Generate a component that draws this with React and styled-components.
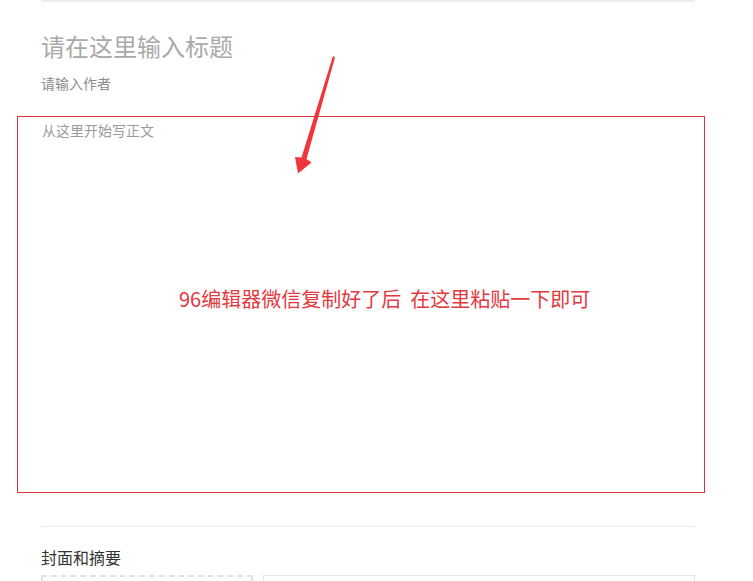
import React from "react";
import styled, { createGlobalStyle } from "styled-components";

const Global = createGlobalStyle`
  html, body { margin: 0; padding: 0; background: #fff; }
  body { font-family: "Noto Sans CJK SC", "Noto Sans", sans-serif; }
`;

const Page = styled.div`
  position: relative;
  width: 753px;
  height: 581px;
  overflow: hidden;
`;

const Column = styled.div`
  margin: 0 58px 0 41px;
  border-top: 2px solid #ececec;
`;

const Title = styled.div`
  margin-top: 28px;
  font-size: 24px;
  line-height: 32px;
  color: #a9a9a9;
`;

const Author = styled.div`
  margin-top: 11px;
  font-size: 14px;
  line-height: 20px;
  color: #8c8c8c;
`;

const EditorBox = styled.div`
  margin: 23px -10px 0 -24px;
  height: 375px;
  border: 1px solid #d9363e;
  display: flex;
  flex-direction: column;
`;

const Placeholder = styled.div`
  margin: 3px 0 0 24px;
  font-size: 14px;
  line-height: 20px;
  color: #9a9a9a;
`;

const Hint = styled.div`
  margin: 146px 0 0 161px;
  font-size: 20px;
  line-height: 26px;
  color: #e3393f;
  white-space: pre;
`;

const Divider = styled.div`
  margin-top: 33px;
  border-top: 1px solid #ebebeb;
`;

const SectionTitle = styled.div`
  margin-top: 18px;
  font-size: 16px;
  line-height: 24px;
  color: #333;
`;

const CoverRow = styled.div`
  margin-top: 6px;
  display: flex;
  gap: 10px;
`;

const CoverBox = styled.div`
  width: 208px;
  height: 40px;
  border: 2px dashed #e2e2e2;
`;

const DigestBox = styled.div`
  flex: 1;
  height: 40px;
  border: 1px solid #e4e4e4;
`;

const Arrow = styled.svg`
  position: absolute;
  left: 0;
  top: 0;
  pointer-events: none;
`;

export default function App() {
  return (
    <Page>
      <Global />
      <Column>
        <Title>请在这里输入标题</Title>
        <Author>请输入作者</Author>
        <EditorBox>
          <Placeholder>从这里开始写正文</Placeholder>
          <Hint>{"96编辑器微信复制好了后  在这里粘贴一下即可"}</Hint>
        </EditorBox>
        <Divider />
        <SectionTitle>封面和摘要</SectionTitle>
        <CoverRow>
          <CoverBox />
          <DigestBox />
        </CoverRow>
      </Column>
      <Arrow width="753" height="581" viewBox="0 0 753 581">
        <path
          d="M333 56 L335 57.5 L306.5 159 L311.5 162.5 L298 173.5 L295 157 L301.5 157.5 Z"
          fill="#f0363a"
        />
      </Arrow>
    </Page>
  );
}
